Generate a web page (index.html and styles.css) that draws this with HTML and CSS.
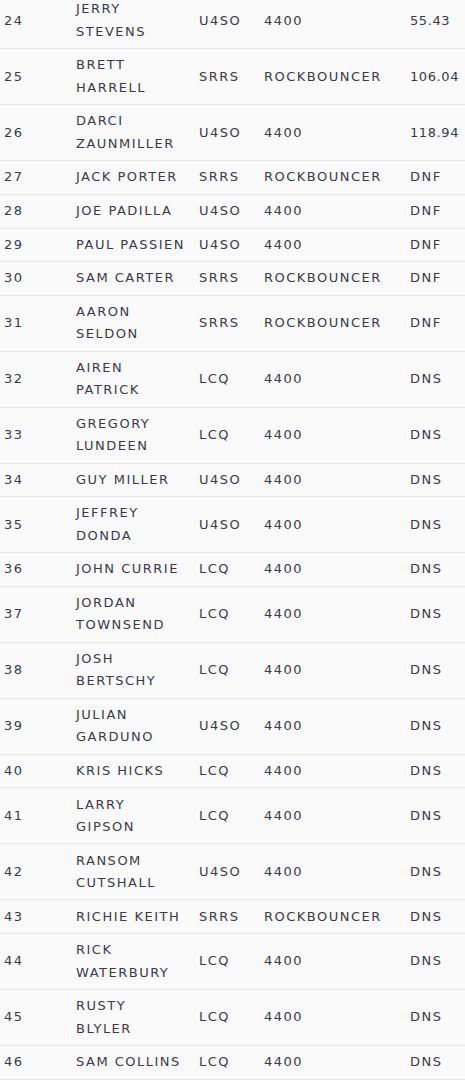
FILE: index.html
```html
<!DOCTYPE html>
<html lang="en">
<head>
<meta charset="utf-8">
<title>Results</title>
<link rel="stylesheet" href="styles.css">
</head>
<body>
<table class="results">
  <colgroup>
    <col class="c-pos"><col class="c-name"><col class="c-class"><col class="c-bike"><col class="c-time">
  </colgroup>
  <tbody>
    <tr><td>24</td><td>JERRY STEVENS</td><td>U4SO</td><td>4400</td><td class="num">55.43</td></tr>
    <tr><td>25</td><td>BRETT HARRELL</td><td>SRRS</td><td>ROCKBOUNCER</td><td class="num">106.04</td></tr>
    <tr><td>26</td><td>DARCI ZAUNMILLER</td><td>U4SO</td><td>4400</td><td class="num">118.94</td></tr>
    <tr><td>27</td><td>JACK PORTER</td><td>SRRS</td><td>ROCKBOUNCER</td><td>DNF</td></tr>
    <tr><td>28</td><td>JOE PADILLA</td><td>U4SO</td><td>4400</td><td>DNF</td></tr>
    <tr><td>29</td><td>PAUL PASSIEN</td><td>U4SO</td><td>4400</td><td>DNF</td></tr>
    <tr><td>30</td><td>SAM CARTER</td><td>SRRS</td><td>ROCKBOUNCER</td><td>DNF</td></tr>
    <tr><td>31</td><td>AARON SELDON</td><td>SRRS</td><td>ROCKBOUNCER</td><td>DNF</td></tr>
    <tr><td>32</td><td>AIREN PATRICK</td><td>LCQ</td><td>4400</td><td>DNS</td></tr>
    <tr><td>33</td><td>GREGORY LUNDEEN</td><td>LCQ</td><td>4400</td><td>DNS</td></tr>
    <tr><td>34</td><td>GUY MILLER</td><td>U4SO</td><td>4400</td><td>DNS</td></tr>
    <tr><td>35</td><td>JEFFREY DONDA</td><td>U4SO</td><td>4400</td><td>DNS</td></tr>
    <tr><td>36</td><td>JOHN CURRIE</td><td>LCQ</td><td>4400</td><td>DNS</td></tr>
    <tr><td>37</td><td>JORDAN TOWNSEND</td><td>LCQ</td><td>4400</td><td>DNS</td></tr>
    <tr><td>38</td><td>JOSH BERTSCHY</td><td>LCQ</td><td>4400</td><td>DNS</td></tr>
    <tr><td>39</td><td>JULIAN GARDUNO</td><td>U4SO</td><td>4400</td><td>DNS</td></tr>
    <tr><td>40</td><td>KRIS HICKS</td><td>LCQ</td><td>4400</td><td>DNS</td></tr>
    <tr><td>41</td><td>LARRY GIPSON</td><td>LCQ</td><td>4400</td><td>DNS</td></tr>
    <tr><td>42</td><td>RANSOM CUTSHALL</td><td>U4SO</td><td>4400</td><td>DNS</td></tr>
    <tr><td>43</td><td>RICHIE KEITH</td><td>SRRS</td><td>ROCKBOUNCER</td><td>DNS</td></tr>
    <tr><td>44</td><td>RICK WATERBURY</td><td>LCQ</td><td>4400</td><td>DNS</td></tr>
    <tr><td>45</td><td>RUSTY BLYLER</td><td>LCQ</td><td>4400</td><td>DNS</td></tr>
    <tr><td>46</td><td>SAM COLLINS</td><td>LCQ</td><td>4400</td><td>DNS</td></tr>
  </tbody>
</table>
</body>
</html>
```
FILE: styles.css
```css
html, body {
  margin: 0;
  padding: 0;
  background: #f9f9f9;
}
body {
  font-family: "DejaVu Sans", "Liberation Sans", sans-serif;
  font-size: 13px;
  letter-spacing: 1.5px;
  color: #3c3a48;
  overflow: hidden;
}
.results {
  width: 465px;
  border-collapse: collapse;
  table-layout: fixed;
  margin-top: -6.7px;
}
.c-pos { width: 76px; }
.c-name { width: 123px; }
.c-class { width: 65px; }
.c-bike { width: 146px; }
.c-time { width: 55px; }
.results td {
  padding: 5.1px 4px 5.1px 0;
  line-height: 22.4px;
  border-bottom: 1px solid #e6e6e6;
  vertical-align: middle;
  text-align: left;
  white-space: normal;
}
.results td:first-child {
  padding-left: 4px;
}
.results td:nth-child(2) {
  padding-right: 12px;
}
.results td:last-child {
  padding-right: 0;
  white-space: nowrap;
}
.results td.num {
  letter-spacing: 0.6px;
}
```
